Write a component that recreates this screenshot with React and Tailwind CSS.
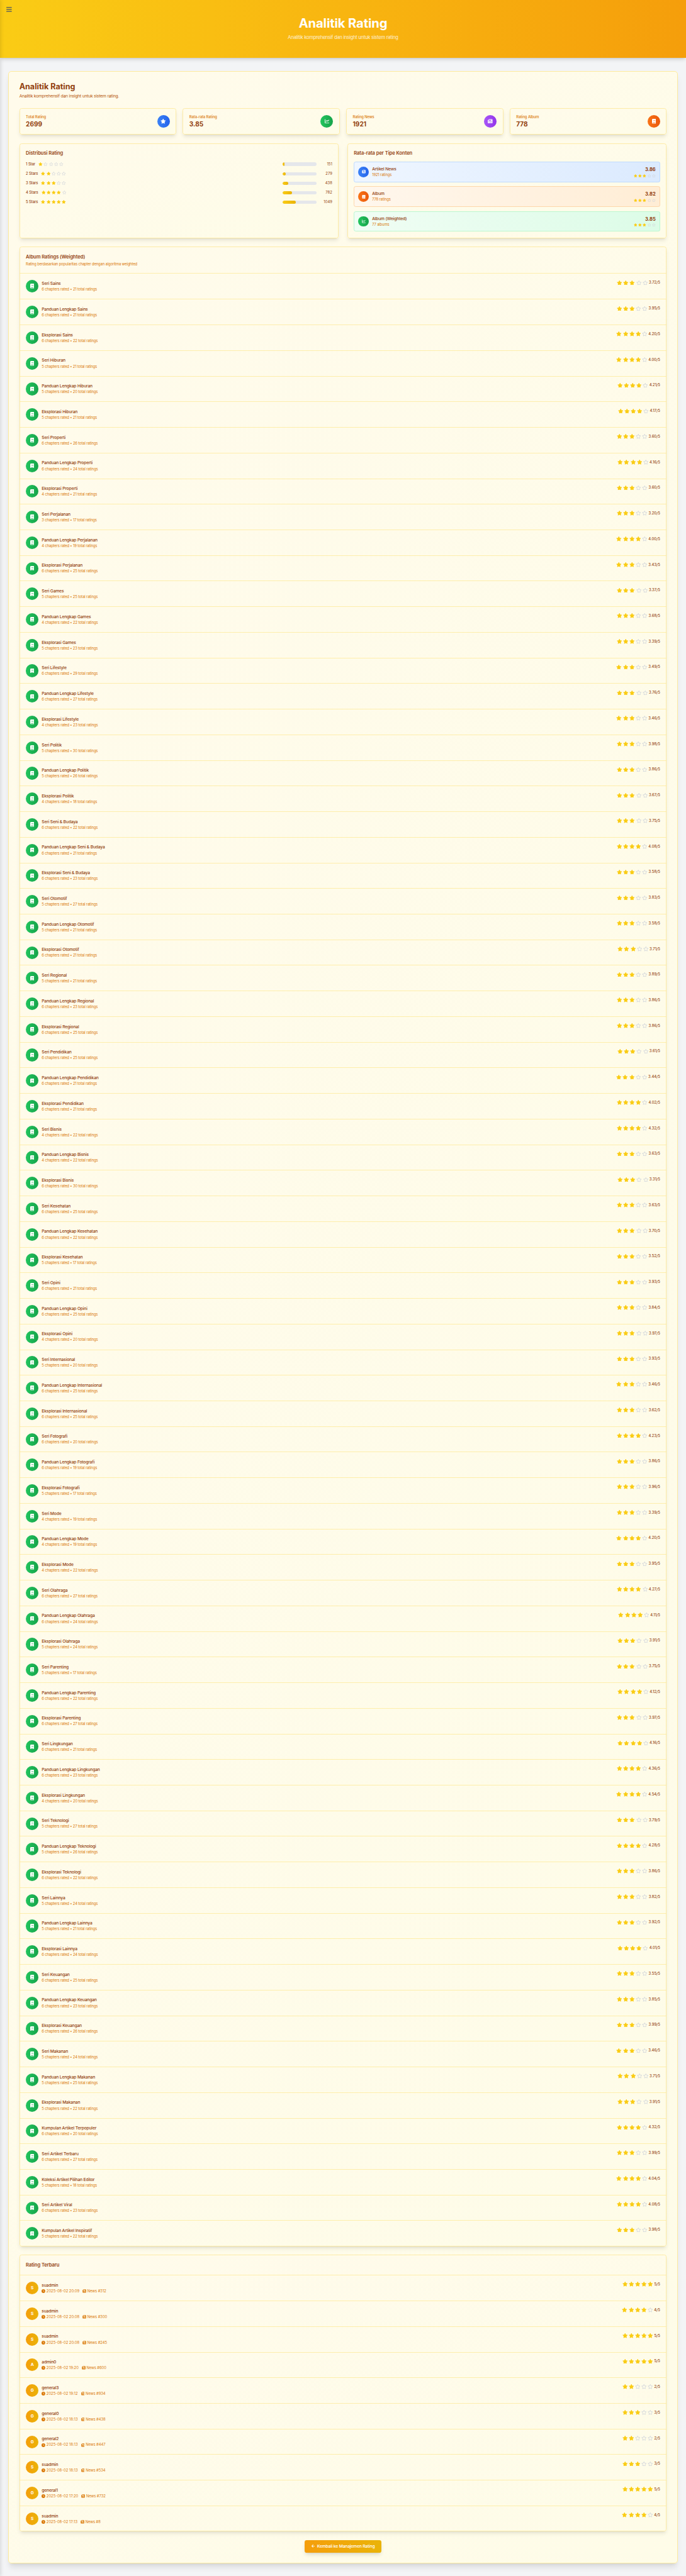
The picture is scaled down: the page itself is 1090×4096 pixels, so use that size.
import React from "react";
import {
  FaArrowLeft,
  FaBars,
  FaBook,
  FaChartLine,
  FaClock,
  FaNewspaper,
  FaRegStar,
  FaStar,
} from "react-icons/fa6";

const STATS = [
  { label: "Total Rating", value: "2699", Icon: FaStar, tone: "from-[#3b82f6] to-[#2563eb]", shape: "h-[1em] w-[1.125em]" },
  { label: "Rata-rata Rating", value: "3.85", Icon: FaChartLine, tone: "from-[#22c55e] to-[#16a34a]", shape: "size-[1em]" },
  { label: "Rating News", value: "1921", Icon: FaNewspaper, tone: "from-[#a855f7] to-[#9333ea]", shape: "size-[1em]" },
  { label: "Rating Album", value: "778", Icon: FaBook, tone: "from-[#f97316] to-[#ea580c]", shape: "h-[1em] w-[0.875em]" },
];

const TOTAL = 2699;
const DISTRIBUTION = [
  [1, 151],
  [2, 279],
  [3, 438],
  [4, 782],
  [5, 1049],
];

const TYPES = [
  {
    title: "Artikel News",
    note: "1921 ratings",
    score: "3.86",
    Icon: FaNewspaper,
    card: "from-[#eff6ff] to-[#dbeafe] outline-[#bfdbfe]",
    tone: "from-[#3b82f6] to-[#2563eb]",
  },
  {
    title: "Album",
    note: "778 ratings",
    score: "3.82",
    Icon: FaBook,
    card: "from-[#fff7ed] to-[#ffedd5] outline-[#fed7aa]",
    tone: "from-[#f97316] to-[#ea580c]",
  },
  {
    title: "Album (Weighted)",
    note: "77 albums",
    score: "3.85",
    Icon: FaChartLine,
    card: "from-[#f0fdf4] to-[#dcfce7] outline-[#bbf7d0]",
    tone: "from-[#22c55e] to-[#16a34a]",
  },
];

// topic, then [chapters, total ratings, score] for each of its three albums
const TOPICS = [
  ["Sains", [6, 21, "3.72"], [6, 21, "3.95"], [6, 22, "4.20"]],
  ["Hiburan", [5, 21, "4.00"], [5, 20, "4.21"], [5, 21, "4.17"]],
  ["Properti", [6, 26, "3.60"], [6, 24, "4.16"], [4, 21, "3.60"]],
  ["Perjalanan", [3, 17, "3.20"], [4, 19, "4.00"], [6, 25, "3.43"]],
  ["Games", [5, 25, "3.37"], [4, 22, "3.68"], [5, 23, "3.39"]],
  ["Lifestyle", [6, 29, "3.49"], [6, 27, "3.76"], [4, 23, "3.46"]],
  ["Politik", [5, 30, "3.98"], [5, 26, "3.86"], [4, 18, "3.67"]],
  ["Seni & Budaya", [6, 22, "3.75"], [6, 21, "4.08"], [6, 23, "3.58"]],
  ["Otomotif", [5, 27, "3.83"], [5, 21, "3.58"], [6, 21, "3.71"]],
  ["Regional", [5, 21, "3.89"], [6, 23, "3.86"], [6, 25, "3.86"]],
  ["Pendidikan", [6, 25, "3.61"], [6, 21, "3.44"], [6, 21, "4.02"]],
  ["Bisnis", [4, 22, "4.32"], [4, 22, "3.63"], [6, 30, "3.31"]],
  ["Kesehatan", [6, 25, "3.63"], [6, 22, "3.70"], [5, 17, "3.52"]],
  ["Opini", [6, 21, "3.93"], [6, 25, "3.84"], [4, 20, "3.97"]],
  ["Internasional", [5, 20, "3.93"], [6, 25, "3.46"], [6, 25, "3.62"]],
  ["Fotografi", [6, 20, "4.23"], [6, 19, "3.86"], [5, 17, "3.96"]],
  ["Mode", [4, 19, "3.39"], [4, 19, "4.20"], [4, 22, "3.95"]],
  ["Olahraga", [6, 27, "4.27"], [6, 24, "4.11"], [5, 24, "3.91"]],
  ["Parenting", [5, 17, "3.75"], [6, 22, "4.12"], [6, 27, "3.97"]],
  ["Lingkungan", [6, 21, "4.16"], [6, 23, "4.36"], [4, 20, "4.54"]],
  ["Teknologi", [5, 27, "3.79"], [5, 26, "4.28"], [6, 22, "3.86"]],
  ["Lainnya", [5, 24, "3.82"], [5, 21, "3.92"], [6, 24, "4.01"]],
  ["Keuangan", [6, 25, "3.55"], [6, 23, "3.85"], [6, 26, "3.99"]],
  ["Makanan", [5, 24, "3.46"], [5, 25, "3.71"], [5, 22, "3.91"]],
];

const SERIES = ["Seri", "Panduan Lengkap", "Eksplorasi"];

const ALBUMS = [
  ...TOPICS.flatMap(([topic, ...rows]) => rows.map((row, i) => [`${SERIES[i]} ${topic}`, ...row])),
  ["Kumpulan Artikel Terpopuler", 6, 20, "4.32"],
  ["Seri Artikel Terbaru", 6, 27, "3.99"],
  ["Koleksi Artikel Pilihan Editor", 5, 18, "4.04"],
  ["Seri Artikel Viral", 6, 23, "4.08"],
  ["Kumpulan Artikel Inspiratif", 5, 22, "3.98"],
];

const RECENT = [
  ["suadmin", "2025-08-02 20:09", 312, 5],
  ["suadmin", "2025-08-02 20:08", 300, 4],
  ["suadmin", "2025-08-02 20:08", 245, 5],
  ["admin0", "2025-08-02 19:20", 600, 5],
  ["general3", "2025-08-02 19:12", 934, 2],
  ["general0", "2025-08-02 18:13", 438, 3],
  ["general2", "2025-08-02 18:13", 447, 2],
  ["suadmin", "2025-08-02 18:13", 534, 3],
  ["general1", "2025-08-02 17:20", 732, 5],
  ["suadmin", "2025-08-02 17:13", 8, 4],
];

const PANEL =
  "rounded-lg bg-linear-to-br from-[#fffbeb] to-[#fefce8] outline-1 -outline-offset-1 outline-[#fde68a]/70 shadow-[0_4px_6px_-1px_rgba(0,0,0,0.1),0_2px_3px_-2px_rgba(0,0,0,0.1)]";

function Stars({ count, size }) {
  return (
    <span className={`flex items-center gap-1 ${size}`}>
      {[1, 2, 3, 4, 5].map((n) =>
        n <= count ? (
          <FaStar key={n} className="h-[1em] w-[1.125em] text-[#facc15]" />
        ) : (
          <FaRegStar key={n} className="h-[1em] w-[1.125em] text-[#d1d5db]" />
        )
      )}
    </span>
  );
}

function ListRow({ first, avatar, avatarTone, title, children, stars, score }) {
  return (
    <div
      className={`flex items-center justify-between px-6 ${
        first ? "h-24" : "h-[40.735px] border-t border-[#fde68a]/65"
      }`}
    >
      <div className="flex items-center gap-3">
        <div
          className={`flex size-12 shrink-0 items-center justify-center rounded-full bg-linear-to-r text-white ${avatarTone}`}
        >
          {avatar}
        </div>
        <div>
          <h4 className="text-base font-medium tracking-[-0.025em] text-[#92400e]">{title}</h4>
          {children}
        </div>
      </div>
      <div className="flex h-12 items-start">
        <div className="flex h-5 items-center gap-1">
          <Stars count={stars} size="text-lg" />
          <span className="text-sm font-medium text-[#92400e]">{score}/5</span>
        </div>
      </div>
    </div>
  );
}

export default function App() {
  return (
    <div className="relative h-[4096px] w-[1090px] overflow-hidden bg-[#f3f4f6] font-['Inter',sans-serif] text-base antialiased [--spacing:1.67951px] [--text-xs:5.038px] [--text-sm:5.878px] [--text-base:6.718px] [--text-lg:7.558px] [--text-2xl:10.077px] [--text-3xl:12.596px] [--text-5xl:20.154px] [--radius-lg:3.36px] [--radius-xl:5.04px]">
      <header className="relative h-55 bg-linear-to-r from-[#facc15] to-[#f59e0b] pt-16 text-center shadow-[0_4px_6px_-1px_rgba(0,0,0,0.12),0_2px_3px_-2px_rgba(0,0,0,0.12)]">
        <h1 className="text-5xl font-bold tracking-[-0.006em] text-white">Analitik Rating</h1>
        <p className="mt-4 text-lg tracking-[-0.032em] text-white/80">
          Analitik komprehensif dan insight untuk sistem rating
        </p>
      </header>

      {/* menu toggle and the edge shadow of the collapsed sidebar */}
      <button className="absolute top-6 left-6 flex text-[10.077px] text-[#4b5563]" aria-label="Menu">
        <FaBars className="h-[1em] w-[0.875em]" />
      </button>
      <div className="absolute top-0 -left-10 h-full w-10 shadow-[0_0_6px_1px_rgba(0,0,0,0.13)]" />

      <main className="px-8 pt-12">
        <div className="rounded-xl bg-linear-to-br from-[#fffbeb] to-[#fefce8] p-10.25 shadow-[0_8px_10px_-2px_rgba(0,0,0,0.1),0_3px_4px_-3px_rgba(0,0,0,0.1)] outline-1 -outline-offset-1 outline-[#fde68a]/80">
          <h2 className="text-3xl font-bold text-[#92400e]">Analitik Rating</h2>
          <p className="mt-2 text-base tracking-[-0.029em] text-[#b45309]">
            Analitik komprehensif dan insight untuk sistem rating.
          </p>

          <div className="mt-8 grid grid-cols-4 gap-6">
            {STATS.map(({ label, value, Icon, tone, shape }) => (
              <div key={label} className={`flex items-center justify-between p-6.25 ${PANEL}`}>
                <div>
                  <p className="text-sm font-medium tracking-[-0.015em] text-[#d97706]">{label}</p>
                  <p className="text-2xl font-bold text-[#92400e]">{value}</p>
                </div>
                <div
                  className={`flex size-12 items-center justify-center rounded-full bg-linear-to-r text-lg text-white ${tone}`}
                >
                  <Icon className={shape} />
                </div>
              </div>
            ))}
          </div>

          <div className="mt-8 grid grid-cols-2 gap-8">
            <section className={`p-6.25 ${PANEL}`}>
              <h3 className="text-lg/7 font-semibold tracking-[-0.005em] text-[#92400e]">Distribusi Rating</h3>
              <div className="mt-4 flex flex-col gap-4">
                {DISTRIBUTION.map(([n, count]) => (
                  <div key={n} className="flex h-5 items-center justify-between text-sm text-[#92400e]">
                    <div className="flex items-center gap-3">
                      <span className="font-medium tracking-[-0.015em]">{n === 1 ? "1 Star" : `${n} Stars`}</span>
                      <Stars count={n} size="text-sm" />
                    </div>
                    <div className="flex items-center gap-3">
                      <div className="h-3 w-32 overflow-hidden rounded-full bg-[#e5e7eb]">
                        <div
                          className="h-full rounded-full bg-linear-to-r from-[#facc15] to-[#eab308]"
                          style={{ width: `${(count / TOTAL) * 100}%` }}
                        />
                      </div>
                      <span className="w-12 text-right">{count}</span>
                    </div>
                  </div>
                ))}
              </div>
            </section>

            <section className={`p-6.25 ${PANEL}`}>
              <h3 className="text-lg/7 font-semibold tracking-[-0.005em] text-[#92400e]">
                Rata-rata per Tipe Konten
              </h3>
              <div className="mt-4 flex flex-col gap-4">
                {TYPES.map(({ title, note, score, Icon, card, tone }) => (
                  <div
                    key={title}
                    className={`flex items-center justify-between rounded-lg bg-linear-to-r p-4.25 outline-1 -outline-offset-1 ${card}`}
                  >
                    <div className="flex items-center gap-3">
                      <div
                        className={`flex size-10 items-center justify-center rounded-full bg-linear-to-r text-sm text-white ${tone}`}
                      >
                        <Icon className="size-[1em]" />
                      </div>
                      <div>
                        <h4 className="text-base font-medium tracking-[-0.025em] text-[#92400e]">{title}</h4>
                        <p className="text-sm tracking-[-0.022em] text-[#d97706]">{note}</p>
                      </div>
                    </div>
                    <div className="flex flex-col items-end">
                      <span className="text-lg/7 font-bold text-[#92400e]">{score}</span>
                      <div className="flex h-4 items-center">
                        <Stars count={3} size="text-xs" />
                      </div>
                    </div>
                  </div>
                ))}
              </div>
            </section>
          </div>

          <section className={`mt-8 p-0.25 ${PANEL}`}>
            <div className="h-25.25 border-b border-[#fde68a]/65 px-6 pt-6">
              <h3 className="text-lg/7 font-semibold tracking-[-0.007em] text-[#92400e]">Album Ratings (Weighted)</h3>
              <p className="mt-1 text-sm tracking-[-0.025em] text-[#d97706]">
                Rating berdasarkan popularitas chapter dengan algoritma weighted
              </p>
            </div>
            {ALBUMS.map(([title, chapters, total, score], i) => (
              <ListRow
                key={title}
                first={i === 0}
                avatar={<FaBook className="h-[1em] w-[0.875em] text-lg" />}
                avatarTone="from-[#22c55e] to-[#16a34a]"
                title={title}
                stars={Math.floor(Number(score))}
                score={score}
              >
                <p className="text-sm tracking-[-0.0225em] text-[#d97706]">
                  {`${chapters} chapters rated • ${total} total ratings`}
                </p>
              </ListRow>
            ))}
          </section>

          <section className={`mt-8 p-0.25 ${PANEL}`}>
            <div className="h-19.25 border-b border-[#fde68a]/65 px-6 pt-6">
              <h3 className="text-lg/7 font-semibold tracking-[-0.005em] text-[#92400e]">Rating Terbaru</h3>
            </div>
            {RECENT.map(([user, time, news, stars], i) => (
              <ListRow
                key={i}
                first={i === 0}
                avatar={<span className="text-base font-bold">{user[0].toUpperCase()}</span>}
                avatarTone="from-[#f59e0b] to-[#eab308]"
                title={user}
                stars={stars}
                score={stars}
              >
                <p className="flex items-center gap-3 text-sm text-[#d97706]">
                  <span className="flex items-center gap-1">
                    <FaClock className="size-[1em]" />
                    {time}
                  </span>
                  <span className="flex items-center gap-1 tracking-[-0.01em]">
                    <FaNewspaper className="size-[1em]" />
                    {`News #${news}`}
                  </span>
                </p>
              </ListRow>
            ))}
          </section>

          <div className="mt-8 flex justify-center">
            <a className="flex h-12 items-center gap-2 rounded-lg bg-linear-to-r from-[#f59e0b] to-[#eab308] px-6 text-base font-medium tracking-[-0.024em] text-white shadow-[0_4px_6px_-1px_rgba(0,0,0,0.12),0_2px_3px_-2px_rgba(0,0,0,0.12)]">
              <FaArrowLeft className="h-[1em] w-[0.875em]" />
              Kembali ke Manajemen Rating
            </a>
          </div>
        </div>
      </main>
    </div>
  );
}
